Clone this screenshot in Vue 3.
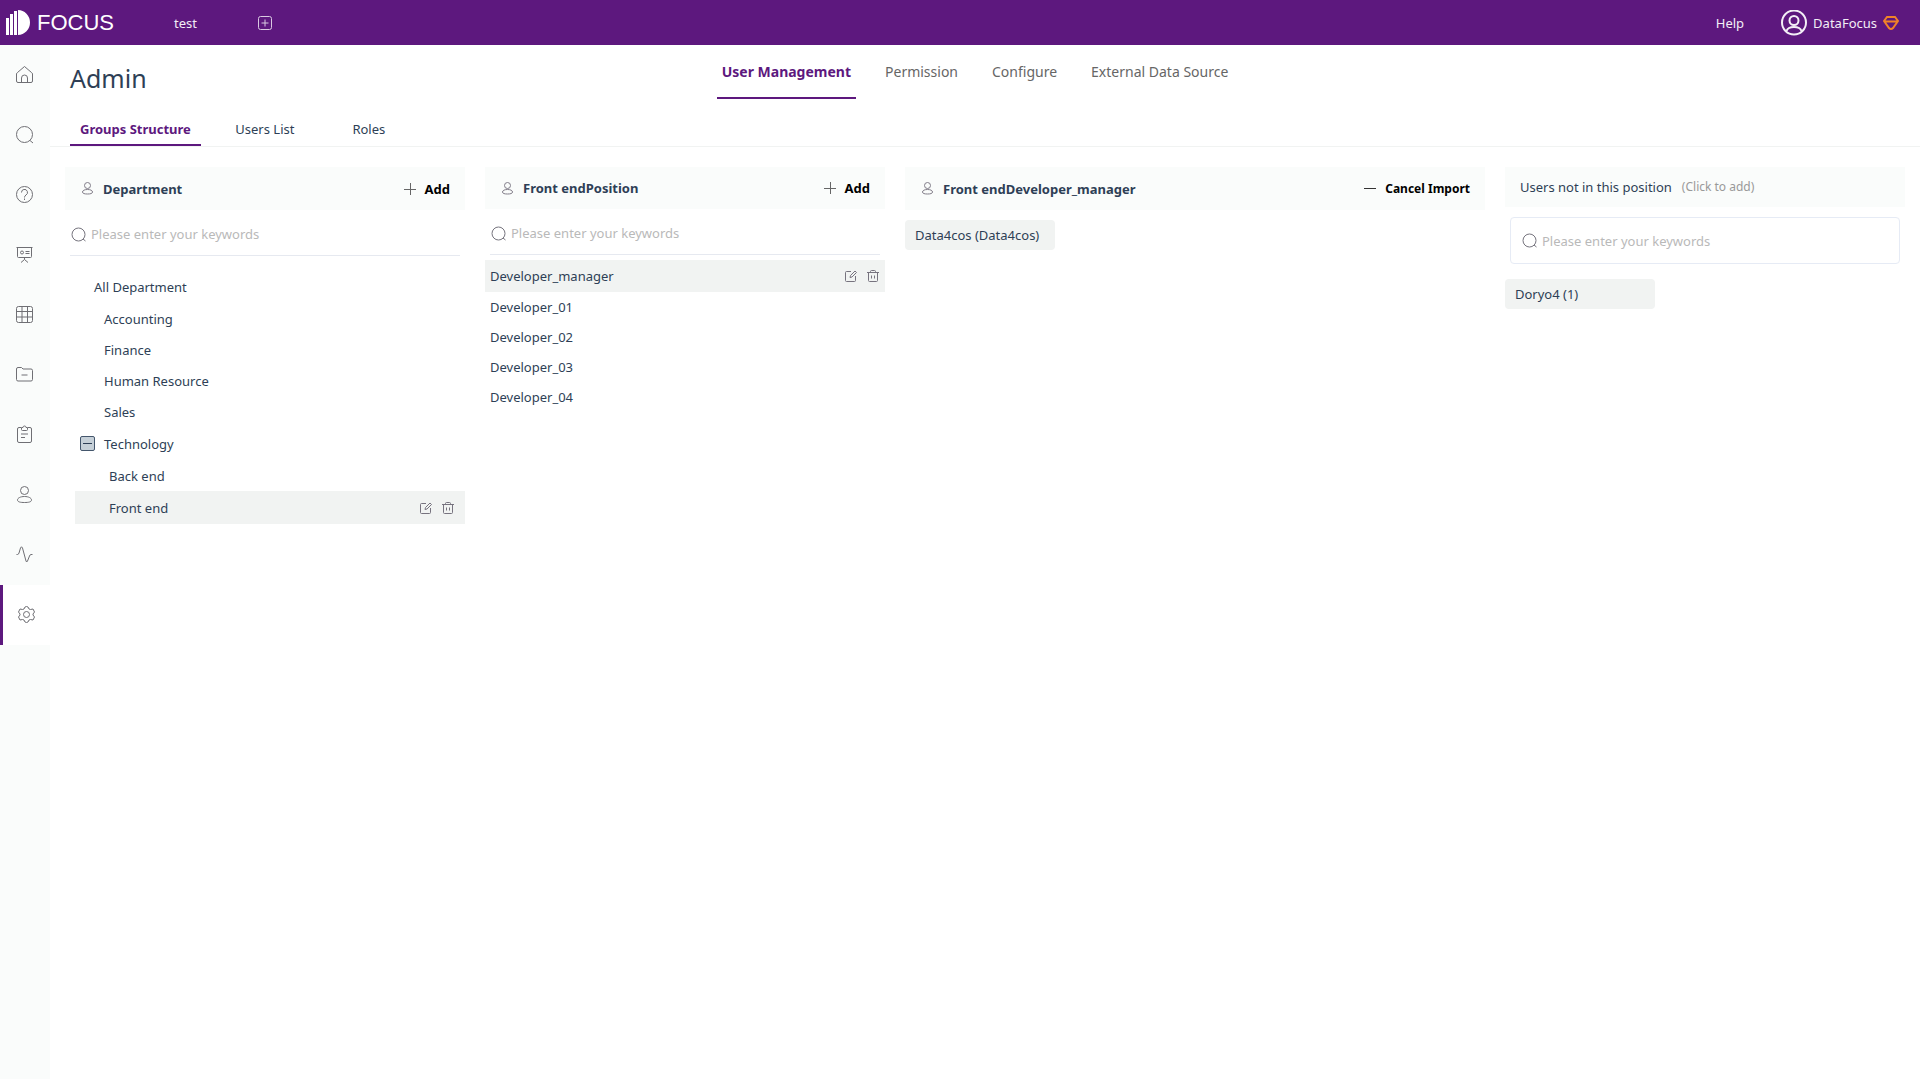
<script setup>
import { ref } from 'vue'

const sideItems = [
  { name: 'Home', paths: ['M2.5 7.5 9.5 1.5l7 6a2 2 0 0 1 1 1.500v7a1.500 1.500 0 0 1-1.500 1.500H3a1.500 1.500 0 0 1-1.500-1.500V9a2 2 0 0 1 1-1.500z', 'M6.500 17.500V13a3 3 0 0 1 6 0v4.500'] },
  { name: 'Search', paths: ['M1.500 9.500a8 8 0 1 1 16 0a8 8 0 1 1-16 0', 'm15 15.500 3 2.500'] },
  { name: 'Questions', paths: ['M1.500 9.500a8 8 0 1 1 16 0a8 8 0 1 1-16 0', 'M6.500 7.500a3 3 0 1 1 4.500 2.500q-1.500 1-1.500 2.500', 'M9.500 13.500v1.500'] },
  { name: 'Boards', paths: ['M1.500 2.500h16M2.500 2.500v9a1 1 0 0 0 1 1h12a1 1 0 0 0 1-1v-9', 'M5.500 7.500a1.500 1.500 0 1 1 3 0a1.500 1.500 0 1 1-3 0', 'M10.500 6.500h4M10.500 8.500h4M9.500 12.500v2M6 17.500l3.500-3 3.500 3'] },
  { name: 'Tables', paths: ['M3.500 1.500h12a2 2 0 0 1 2 2v12a2 2 0 0 1-2 2h-12a2 2 0 0 1-2-2v-12a2 2 0 0 1 2-2z', 'M7 1.500v16M12.500 1.500v16M1.500 6.500h16M1.500 12h16'] },
  { name: 'Resources', paths: ['M1.500 4a1.500 1.500 0 0 1 1.500-1.500h3.500L8 4h8a1.500 1.500 0 0 1 1.500 1.500v9A1.500 1.500 0 0 1 16 16H3a1.500 1.500 0 0 1-1.500-1.500z', 'M6.500 10h6'] },
  { name: 'Tasks', paths: ['M6 2.500H4a1.500 1.500 0 0 0-1.500 1.500v12A1.500 1.500 0 0 0 4 17.500h11a1.500 1.500 0 0 0 1.500-1.500V4A1.500 1.500 0 0 0 15 2.500h-2', 'M6.500 2.500h1.500a1.500 1.500 0 0 1 3 0h1.500v2q0 1-1 1h-4q-1 0-1-1z', 'M6 9h7M6 12.500h4'] },
  { name: 'Users', paths: ['M5.500 5.500a4 4 0 1 1 8 0a4 4 0 1 1-8 0', 'M2.500 15c0-2 3-3.500 7-3.500s7 1.500 7 3.500-3 2.500-7 2.500-7-.500-7-2.500z'] },
  { name: 'Activity', paths: ['M1.500 9.500h1q1 0 1.500-1.500l1.500-5q1-2.500 2 0l3.500 13q.500 2 1.500 0l2-5q.500-1.500 1.500-1.500h1.500'] },
  { name: 'Admin', paths: ['M8 2q1.500-1 3 0l1 2 1.500.500 2.500-.500 1.500 3-1.500 2v1l1.500 2-1.500 3-2.500-.500-1.500.500-1 2q-1.500 1-3 0l-1-2-1.500-.500-2.500.500-1.500-3 1.500-2V9L1.500 7 3 4l2.500.500L7 4z', 'M6.500 9.500a3 3 0 1 1 6 0a3 3 0 1 1-6 0'] },
]
const mainTabs = ['User Management', 'Permission', 'Configure', 'External Data Source']
const subTabs = ['Groups Structure', 'Users List', 'Roles']
const tree = [
  { name: 'All Department', level: 0 },
  { name: 'Accounting', level: 1 },
  { name: 'Finance', level: 1 },
  { name: 'Human Resource', level: 1 },
  { name: 'Sales', level: 1 },
  { name: 'Technology', level: 1, open: true },
  { name: 'Back end', level: 2 },
  { name: 'Front end', level: 2 },
]
const positions = ['Developer_manager', 'Developer_01', 'Developer_02', 'Developer_03', 'Developer_04']
const department = ref('Front end')
const position = ref('Developer_manager')
const departmentQuery = ref('')
const positionQuery = ref('')
const userQuery = ref('')
</script>

<template>
  <div class="app">
    <svg class="defs" aria-hidden="true">
      <symbol id="i-user" viewBox="0 0 11 13"><circle cx="5.500" cy="3.500" r="3" /><path d="M.500 10c0-1.500 2-2.500 5-2.500s5 1 5 2.500-2 2-5 2-5-.500-5-2z" /></symbol>
      <symbol id="i-search" viewBox="0 0 15 15"><circle cx="7.500" cy="7.500" r="6.500" /><path d="m12 12 2.500 2" /></symbol>
      <symbol id="i-plus" viewBox="0 0 12 12"><path shape-rendering="crispEdges" d="M0 6.500h12M6.500 0v12" /></symbol>
      <symbol id="i-minus" viewBox="0 0 12 12"><path shape-rendering="crispEdges" d="M0 5.500h12" /></symbol>
      <symbol id="i-edit" viewBox="0 0 12 12"><path d="M6 1.500H1.500q-1 0-1 1v8q0 1 1 1h8q1 0 1-1V6M5 7.500l.500-2L10 1l1.500 1.500L7 7z" /></symbol>
      <symbol id="i-trash" viewBox="0 0 12 12"><path d="M0 2.500h12M3.500 2.500v-1q0-1 1-1h3q1 0 1 1v1M1.500 2.500v8q0 1 1 1h7q1 0 1-1v-8M4.500 5.500v3M7.500 5.500v3" /></symbol>
    </svg>

    <header class="topbar">
      <a class="logo" href="#">
        <svg width="25" height="26" viewBox="0 0 25 26" aria-hidden="true"><path fill="currentColor" d="M0 8h3v17H0zM4 4h3v21H4zM8 1h3v24H8zM12 0a12 12.500 0 0 1 0 25z" /></svg>
        <span>FOCUS</span>
      </a>
      <a class="project" href="#">test</a>
      <button class="new-tab" type="button" aria-label="New tab">
        <svg width="14" height="14" viewBox="0 0 14 14"><rect x=".5" y=".5" width="13" height="13" rx="2" /><path d="M3.500 7h7M7 3.500v7" /></svg>
      </button>
      <a class="help" href="#">Help</a>
      <a class="account" href="#">
        <svg width="26" height="26" viewBox="0 0 26 26" aria-hidden="true"><circle cx="13" cy="12.500" r="12" /><circle cx="13" cy="10.500" r="4.500" /><path d="M5.500 21c1-3 4-4 7.500-4s6.500 1 7.500 4" /></svg>
        <span>DataFocus</span>
        <svg class="gem" width="16" height="16" viewBox="0 0 16 16" aria-hidden="true"><path d="M4 2h8l3 4-5 7q-2 2-4 0L1 6zM2 6.500h12" /></svg>
      </a>
    </header>

    <div class="body">
      <nav class="sidebar" aria-label="Sections">
        <a v-for="item in sideItems" :key="item.name" href="#" :aria-label="item.name" :class="['side-item', { active: item.name === 'Admin' }]">
          <svg width="19" height="19" viewBox="0 0 19 19"><path v-for="d in item.paths" :key="d" :d="d" /></svg>
        </a>
      </nav>

      <main class="main">
        <div class="heading">
          <h1>Admin</h1>
          <nav class="main-tabs" aria-label="Administration">
            <a v-for="(tab, i) in mainTabs" :key="tab" href="#" :class="{ active: i === 0 }">{{ tab }}</a>
          </nav>
        </div>
        <nav class="sub-tabs" aria-label="User management">
          <a v-for="(tab, i) in subTabs" :key="tab" href="#" :class="{ active: i === 0 }">{{ tab }}</a>
        </nav>

        <div class="columns">
          <section class="column">
            <div class="column-head">
              <svg class="user" width="11" height="13"><use href="#i-user" /></svg>
              <h2>Department</h2>
              <button class="action" type="button"><svg width="12" height="12"><use href="#i-plus" /></svg>Add</button>
            </div>
            <label class="search">
              <svg width="15" height="15"><use href="#i-search" /></svg>
              <input v-model="departmentQuery" type="text" aria-label="Search departments" placeholder="Please enter your keywords" />
            </label>
            <ul class="tree">
              <li v-for="node in tree" :key="node.name" :class="['node', 'level-' + node.level, { open: node.open, selected: node.name === department }]">
                <button v-if="node.open" class="toggle" type="button" aria-label="Collapse"></button>
                <button class="name" type="button" @click="department = node.name">{{ node.name }}</button>
                <template v-if="node.name === department">
                  <button class="tool" type="button" aria-label="Edit"><svg width="12" height="12"><use href="#i-edit" /></svg></button>
                  <button class="tool" type="button" aria-label="Delete"><svg width="12" height="12"><use href="#i-trash" /></svg></button>
                </template>
              </li>
            </ul>
          </section>

          <section class="column">
            <div class="column-head compact">
              <svg class="user" width="11" height="13"><use href="#i-user" /></svg>
              <h2>{{ department }}Position</h2>
              <button class="action" type="button"><svg width="12" height="12"><use href="#i-plus" /></svg>Add</button>
            </div>
            <label class="search">
              <svg width="15" height="15"><use href="#i-search" /></svg>
              <input v-model="positionQuery" type="text" aria-label="Search positions" placeholder="Please enter your keywords" />
            </label>
            <ul class="positions">
              <li v-for="name in positions" :key="name" :class="{ selected: name === position }">
                <button class="name" type="button" @click="position = name">{{ name }}</button>
                <template v-if="name === position">
                  <button class="tool" type="button" aria-label="Edit"><svg width="12" height="12"><use href="#i-edit" /></svg></button>
                  <button class="tool" type="button" aria-label="Delete"><svg width="12" height="12"><use href="#i-trash" /></svg></button>
                </template>
              </li>
            </ul>
          </section>

          <section class="column members">
            <div class="column-head">
              <svg class="user" width="11" height="13"><use href="#i-user" /></svg>
              <h2>{{ department }}{{ position }}</h2>
              <button class="action" type="button"><svg width="12" height="12"><use href="#i-minus" /></svg>Cancel Import</button>
            </div>
            <button class="chip" type="button">Data4cos (Data4cos)</button>
          </section>

          <section class="column others">
            <div class="column-head">
              <h2>Users not in this position</h2>
              <span class="hint">(Click to add)</span>
            </div>
            <label class="search boxed">
              <svg width="15" height="15"><use href="#i-search" /></svg>
              <input v-model="userQuery" type="text" aria-label="Search users" placeholder="Please enter your keywords" />
            </label>
            <button class="chip" type="button">Doryo4 (1)</button>
          </section>
        </div>
      </main>
    </div>
  </div>
</template>

<style>
body { margin: 0; background: #fff; }
</style>

<style scoped>
.app {
  display: flex;
  flex-direction: column;
  min-height: 100vh;
  font: 13px/20px "Noto Sans", "Open Sans", sans-serif;
  color: #2e3f56;
}
.app * { box-sizing: border-box; }
.defs { display: none; }
svg { flex: none; fill: none; stroke: currentColor; }
a { color: inherit; text-decoration: none; }
button { padding: 0; border: 0; background: none; font: inherit; color: inherit; cursor: pointer; }
h1, h2, ul { margin: 0; padding: 0; list-style: none; }

.topbar { display: flex; align-items: center; height: 45px; padding: 0 21px 0 6px; background: #5d187e; color: #f3eef6; }
.logo { display: flex; align-items: center; gap: 6px; width: 168px; color: #fff; font: 22px/26px "Liberation Sans", Arial, sans-serif; }
.logo svg { stroke: none; }
.project { width: 84px; }
.new-tab { display: flex; color: #d9c9e1; }
.help { margin-left: auto; margin-right: 37px; }
.account { display: flex; align-items: center; gap: 6px; }
.account svg { stroke-width: 2; }
.account .gem { color: #f08228; }

.body { display: flex; flex: 1; }
.sidebar { width: 50px; flex: none; background: #fafcfb; }
.side-item { display: flex; align-items: center; justify-content: center; height: 60px; padding: 0 1px 1px 0; color: #6f6f74; }
.side-item.active { padding-right: 0; border-left: 3px solid #5d187e; background: #fff; }

.main { flex: 1; min-width: 0; }
.heading { display: grid; grid-template-columns: 1fr auto 1fr; height: 67px; padding: 0 40px 0 20px; }
.heading h1 { font-size: 25px; font-weight: 400; line-height: 66px; }
.main-tabs { display: flex; gap: 24px; height: 54px; font-size: 14px; line-height: 54px; color: #666; }
.main-tabs a { padding: 0 5px; }
.main-tabs .active { border-bottom: 2px solid #5d187e; font-weight: 700; color: #5d187e; }
.sub-tabs { display: flex; gap: 24px; height: 35px; padding: 0 20px; border-bottom: 1px solid #f1f3f2; line-height: 34px; }
.sub-tabs a { min-width: 80px; padding: 0 10px; text-align: center; }
.sub-tabs .active { height: 34px; border-bottom: 2px solid #5d187e; font-weight: 700; color: #5d187e; }

.columns { display: flex; gap: 20px; padding: 20px 15px; }
.column { width: 400px; flex: 0 1 auto; }
.members { flex: 1 1 0; }
.column-head { display: flex; align-items: center; height: 43px; padding: 0 15px; background: #fafcfb; }
.column-head.compact { height: 42px; }
.column-head h2 { font-size: 13px; font-weight: 700; line-height: 20px; }
.user { margin: 0 10px 0 2px; color: #807c88; }
.action { display: flex; align-items: center; gap: 9px; margin-left: auto; font-weight: 700; color: #000; }
.action svg { color: #666; }
.members .action { font-size: 12px; }
.members .action svg { color: #333; }
.others .column-head { height: 40px; gap: 10px; }
.others h2 { font-weight: 400; }
.hint { font-size: 12px; color: #999; }

.search { display: flex; align-items: center; gap: 5px; height: 46px; margin: 0 5px; padding: 3px 0 0 1px; border-bottom: 1px solid #e6e9f0; color: #76747e; }
.search.boxed { height: 47px; margin: 10px 5px 15px; padding: 0 11px; border: 1px solid #e6ebf5; border-radius: 4px; }
.search input { flex: 1; min-width: 0; padding: 0; border: 0; outline: 0; background: none; font: inherit; color: #2e3f56; }
.search input::placeholder { color: #b9b9b9; opacity: 1; }

.tree { padding: 15px 0 0 10px; }
.node { display: flex; align-items: center; height: 31px; padding-right: 11px; }
.node.level-0 { height: 32px; padding-left: 19px; }
.node.level-1 { padding-left: 29px; }
.node.level-2 { padding-left: 34px; }
.node.open { height: 33px; padding-left: 5px; gap: 9px; }
.node.selected { height: 33px; }
.name { flex: 1; text-align: left; }
.selected { background: #f1f3f2; }
.tool { display: flex; margin-left: 10px; color: #77737f; }
.toggle { display: flex; align-items: center; width: 15px; height: 15px; padding: 0 2px; border: 1px solid #44566c; border-radius: 2px; background: #c6d0d8; }
.toggle::before { content: ""; flex: 1; height: 1px; background: #2e3f56; }

.positions { padding-top: 5px; }
.positions li { display: flex; align-items: center; height: 30px; padding: 0 6px 0 5px; }
.positions li.selected { height: 32px; }

.chip { display: block; width: 150px; height: 30px; padding: 0 10px; border-radius: 4px; background: #f1f3f2; text-align: left; white-space: nowrap; }
.members .chip { margin-top: 10px; }
</style>
